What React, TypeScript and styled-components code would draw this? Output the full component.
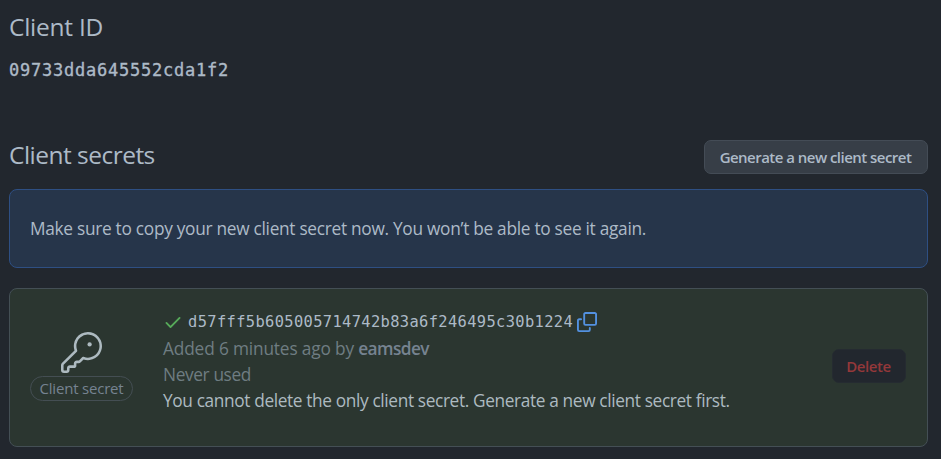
import React from 'react';
import styled, { createGlobalStyle } from 'styled-components';
import { GoKey } from 'react-icons/go';

const GlobalStyle = createGlobalStyle`
  *, *::before, *::after { box-sizing: border-box; }
  body {
    margin: 0;
    background: #22272e;
    color: #adbac7;
    font-family: "Open Sans", "Noto Sans", sans-serif;
    font-size: 17.3px;
    line-height: 26px;
    letter-spacing: -0.29px;
    overflow: hidden;
  }
`;

const Page = styled.main`
  height: 459px;
  padding: 9px 13px 0 9px;
  display: flex;
  flex-direction: column;
`;

const Heading = styled.h2<{ $tracking: number }>`
  margin: 0;
  font-size: 24.5px;
  font-weight: 400;
  line-height: 36px;
  letter-spacing: ${(p) => p.$tracking}px;
`;

const ClientId = styled.code`
  margin-top: 12px;
  font-family: "DejaVu Sans Mono", monospace;
  font-size: 17px;
  line-height: 26px;
  letter-spacing: 0.76px;
  -webkit-text-stroke: 0.35px currentColor;
`;

const SectionHeader = styled.header`
  display: flex;
  align-items: flex-start;
  justify-content: space-between;
  height: 52px;
  margin-top: 54px;
`;

const Button = styled.button<{ $danger?: boolean }>`
  height: 34px;
  width: ${(p) => (p.$danger ? 74 : 224)}px;
  margin-top: ${(p) => (p.$danger ? 0 : 3)}px;
  margin-bottom: ${(p) => (p.$danger ? 3 : 0)}px;
  padding: 0 1px 0 0;
  flex-shrink: 0;
  border: 1px solid ${(p) => (p.$danger ? '#252b31' : '#444c56')};
  border-radius: 7px;
  background: ${(p) => (p.$danger ? '#22272e' : '#373e47')};
  color: ${(p) => (p.$danger ? '#94383a' : '#adbac7')};
  font-family: inherit;
  font-size: 15px;
  font-weight: 600;
  line-height: 32px;
  letter-spacing: ${(p) => (p.$danger ? -0.45 : -0.53)}px;
  white-space: nowrap;
`;

const Notice = styled.section`
  height: 79px;
  flex-shrink: 0;
  display: flex;
  align-items: center;
  padding: 0 20px;
  border: 1px solid #2e4f83;
  border-radius: 8px;
  background: #26354a;
`;

const SecretCard = styled.section`
  height: 159px;
  flex-shrink: 0;
  margin-top: 20px;
  padding: 0 21px 0 20px;
  display: flex;
  align-items: center;
  border: 1px solid #444f55;
  border-radius: 8px;
  background: #2b3630;
`;

const KeyColumn = styled.div`
  width: 103px;
  padding-bottom: 2px;
  display: flex;
  flex-direction: column;
  align-items: center;
  color: #adbac0;
  svg { display: block; }
`;

const Label = styled.span`
  width: 103px;
  height: 25px;
  margin-top: 3px;
  border: 1px solid #444e53;
  border-radius: 13px;
  color: #768390;
  font-size: 15px;
  font-weight: 500;
  line-height: 23px;
  letter-spacing: -0.2px;
  text-align: center;
`;

const Details = styled.div`
  flex: 1;
  margin-left: 30px;
  padding-bottom: 14px;
`;

const SecretLine = styled.div`
  display: flex;
  align-items: center;
  height: 28px;
`;

const SecretValue = styled.code`
  margin: 0 4px 0 5px;
  font-family: "DejaVu Sans Mono", monospace;
  font-size: 15.4px;
  letter-spacing: 0.36px;
`;

const Line = styled.div<{ $muted?: boolean; $tracking?: number }>`
  color: ${(p) => (p.$muted ? '#6f7d82' : '#adbac0')};
  letter-spacing: ${(p) => p.$tracking ?? -0.37}px;
  white-space: nowrap;
  strong { font-weight: 600; color: #768390; letter-spacing: -0.6px; }
`;

const CheckIcon = () => (
  <svg width="20" height="20" viewBox="0 0 16 16" fill="#57ab5a">
    <path d="M13.78 4.22a.75.75 0 0 1 0 1.06l-7.25 7.25a.75.75 0 0 1-1.06 0L2.22 9.28a.751.751 0 0 1 .018-1.042.751.751 0 0 1 1.042-.018L6 10.94l6.72-6.72a.75.75 0 0 1 1.06 0Z" />
  </svg>
);

const CopyIcon = () => (
  <svg width="20" height="20" viewBox="0 0 16 16" fill="#5391e0">
    <path d="M0 6.75C0 5.784.784 5 1.75 5h1.5a.75.75 0 0 1 0 1.5h-1.5a.25.25 0 0 0-.25.25v7.5c0 .138.112.25.25.25h7.5a.25.25 0 0 0 .25-.25v-1.5a.75.75 0 0 1 1.5 0v1.5A1.75 1.75 0 0 1 9.25 16h-7.5A1.75 1.75 0 0 1 0 14.25Z" />
    <path d="M5 1.75C5 .784 5.784 0 6.75 0h7.5C15.216 0 16 .784 16 1.75v7.5A1.75 1.75 0 0 1 14.25 11h-7.5A1.75 1.75 0 0 1 5 9.25Zm1.75-.25a.25.25 0 0 0-.25.25v7.5c0 .138.112.25.25.25h7.5a.25.25 0 0 0 .25-.25v-7.5a.25.25 0 0 0-.25-.25Z" />
  </svg>
);

export default function App() {
  return (
    <Page>
      <GlobalStyle />
      <Heading $tracking={-0.25}>Client ID</Heading>
      <ClientId>09733dda645552cda1f2</ClientId>
      <SectionHeader>
        <Heading $tracking={-0.52}>Client secrets</Heading>
        <Button>Generate a new client secret</Button>
      </SectionHeader>
      <Notice>Make sure to copy your new client secret now. You won’t be able to see it again.</Notice>
      <SecretCard>
        <KeyColumn>
          <GoKey size={41} />
          <Label>Client secret</Label>
        </KeyColumn>
        <Details>
          <SecretLine>
            <CheckIcon />
            <SecretValue>d57fff5b605005714742b83a6f246495c30b1224</SecretValue>
            <CopyIcon />
          </SecretLine>
          <Line $muted $tracking={-0.16}>Added 6 minutes ago by <strong>eamsdev</strong></Line>
          <Line $muted>Never used</Line>
          <Line>You cannot delete the only client secret. Generate a new client secret first.</Line>
        </Details>
        <Button $danger>Delete</Button>
      </SecretCard>
    </Page>
  );
}
